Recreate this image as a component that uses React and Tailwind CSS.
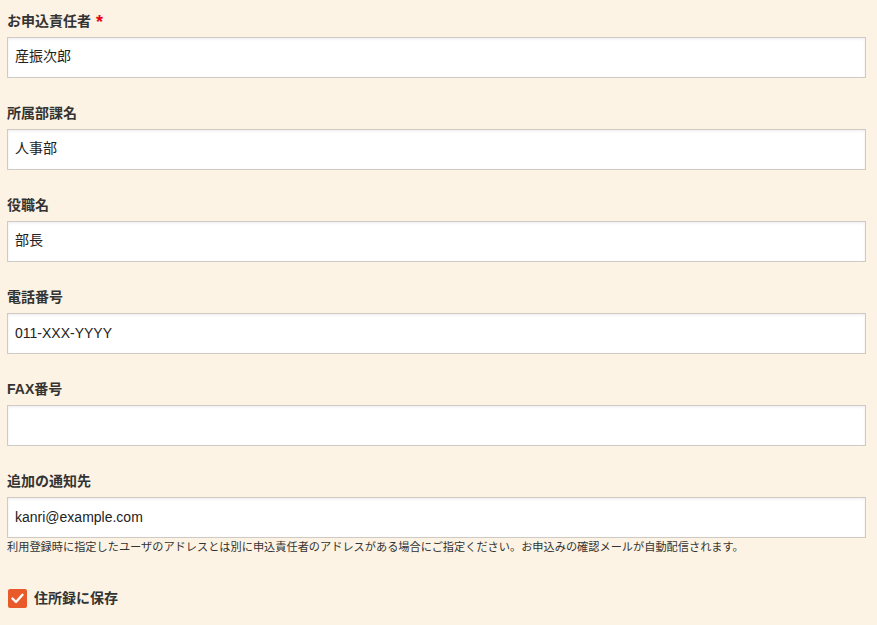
import React from 'react'

const fields = [
    { label: '所属部課名', value: '人事部', cjk: true },
    { label: '役職名', value: '部長', cjk: true },
    { label: '電話番号', value: '011-XXX-YYYY' },
    { label: 'FAX番号', value: '' },
]

function Field({ label, value, required, cjk, children }) {
    return (
        <div className="mb-[24px]">
            <label className="flex items-center h-[20px] mb-[7px] text-[14px] leading-[20px] font-bold text-[#333] pt-[2px]">
                {label}
                {required && <span className="ml-[5px] text-[18px] leading-none text-[#e60012] mt-[2px]">*</span>}
            </label>
            <input
                type="text"
                defaultValue={value}
                className={`block w-full h-[41px] px-[7px] bg-white border border-[#cfcac4] text-[14px] text-[#222] shadow-[inset_0_1px_3px_rgba(0,0,0,0.08)] outline-none ${cjk ? 'pb-[6px]' : 'pb-[1px]'}`}
            />
            {children}
        </div>
    )
}

export default function App() {
    return (
        <div className="min-h-[625px] bg-[#fcf3e5] pt-[10px] pl-[7px] pr-[11px] font-['Liberation_Sans','Noto_Sans_CJK_JP',sans-serif]">
            <Field label="お申込責任者" value="産振次郎" required cjk />
            {fields.map((f) => (
                <Field key={f.label} label={f.label} value={f.value} cjk={f.cjk} />
            ))}
            <Field label="追加の通知先" value="kanri@example.com">
                <p className="mt-[2px] text-[11.2px] leading-[14px] text-[#333]">
                    利用登録時に指定したユーザのアドレスとは別に申込責任者のアドレスがある場合にご指定ください。お申込みの確認メールが自動配信されます。
                </p>
            </Field>
            <div className="flex items-center gap-[7px] mt-[34px] pl-[1px]">
                <span className="flex items-center justify-center w-[19px] h-[19px] rounded-[2px] bg-[#e95a2b]">
                    <svg width="13" height="11" viewBox="0 0 13 11" fill="none">
                        <path d="M1.5 5.5 L5 9 L11.5 1.8" stroke="white" strokeWidth="2.4" strokeLinecap="round" strokeLinejoin="round" />
                    </svg>
                </span>
                <span className="text-[14px] font-bold text-[#333]">住所録に保存</span>
            </div>
        </div>
    )
}
